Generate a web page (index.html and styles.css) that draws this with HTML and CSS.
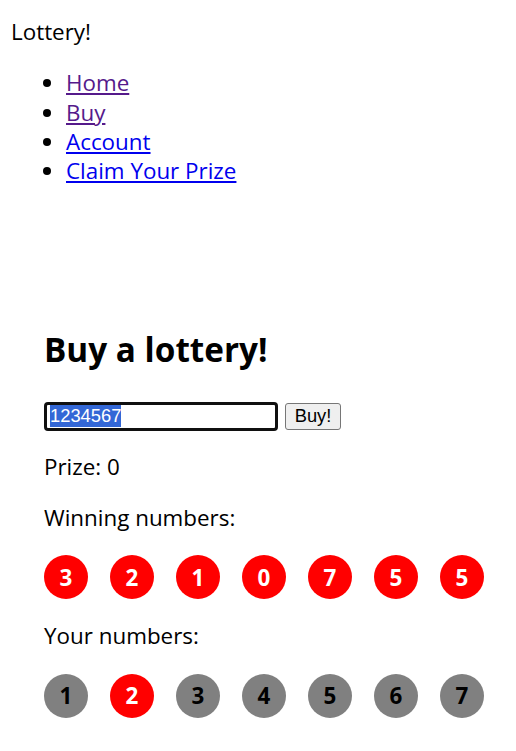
FILE: index.html
```html
<!DOCTYPE html>
<html lang="en">
<head>
<meta charset="utf-8">
<title>Lottery!</title>
<link rel="stylesheet" href="styles.css">
</head>
<body>
<header class="site-header">
  <div class="brand">Lottery!</div>
  <ul class="nav">
    <li><a class="visited" href="#home">Home</a></li>
    <li><a class="visited" href="#buy">Buy</a></li>
    <li><a href="#account">Account</a></li>
    <li><a href="#claim">Claim Your Prize</a></li>
  </ul>
</header>
<section class="buy">
  <h1 class="title">Buy a lottery!</h1>
  <div class="buy-row">
    <input id="ticket" class="ticket-input" type="text" value="1234567">
    <button class="buy-btn" type="button">Buy!</button>
  </div>
  <p class="line prize">Prize: 0</p>
  <p class="line">Winning numbers:</p>
  <div class="balls">
    <span class="ball hit">3</span>
    <span class="ball hit">2</span>
    <span class="ball hit">1</span>
    <span class="ball hit">0</span>
    <span class="ball hit">7</span>
    <span class="ball hit">5</span>
    <span class="ball hit">5</span>
  </div>
  <p class="line">Your numbers:</p>
  <div class="balls">
    <span class="ball">1</span>
    <span class="ball hit">2</span>
    <span class="ball">3</span>
    <span class="ball">4</span>
    <span class="ball">5</span>
    <span class="ball">6</span>
    <span class="ball">7</span>
  </div>
</section>
<script src="app.js"></script>
</body>
</html>
```
FILE: styles.css
```css
html, body {
  background: #ffffff;
}
body {
  margin: 11px;
  font-family: "Open Sans", "Noto Sans", sans-serif;
  font-size: 22.4px;
  line-height: 29.33px;
  color: #000000;
}
.site-header {
  padding-top: 6px;
}
.nav {
  margin: 22px 0;
  padding-left: 55px;
}
.nav a {
  color: #0000ee;
  text-decoration: underline;
}
.nav a.visited {
  color: #551a8b;
}
.buy {
  padding: 92px 0 0 33px;
}
.title {
  font-size: 33.3px;
  font-weight: 700;
  line-height: 44px;
  margin: 27px 0;
}
.buy-row {
  display: flex;
  align-items: center;
  gap: 7px;
  height: 27px;
  margin: 32px 0 22px;
}
.ticket-input {
  box-sizing: border-box;
  width: 234px;
  height: 29px;
  margin: 0;
  padding: 0 3px;
  border: 3px solid #101010;
  border-radius: 4px;
  outline: none;
  font-family: "Liberation Sans", Arial, sans-serif;
  font-size: 18.33px;
  color: #000;
  background: #fff;
}
.ticket-input::selection {
  background: #3367d6;
  color: #ffffff;
}
.buy-btn {
  box-sizing: border-box;
  width: 56px;
  height: 27px;
  margin: 0;
  padding: 0 8px;
  border: 1px solid #767676;
  border-radius: 3px;
  background: #efefef;
  font-family: "Liberation Sans", Arial, sans-serif;
  font-size: 18.33px;
  color: #000;
}
.line {
  margin: 22px 0;
}
.balls {
  display: flex;
  gap: 22px;
  margin: 23px 0 21px;
}
.ball {
  width: 44px;
  height: 44px;
  border-radius: 50%;
  background: #808080;
  color: #000000;
  display: flex;
  align-items: center;
  justify-content: center;
  font-weight: 700;
  font-size: 22.4px;
}
.ball.hit {
  background: #ff0000;
  color: #ffffff;
}
```
FILE: app.js
```js
var input = document.getElementById('ticket');
input.focus();
input.select();
```
